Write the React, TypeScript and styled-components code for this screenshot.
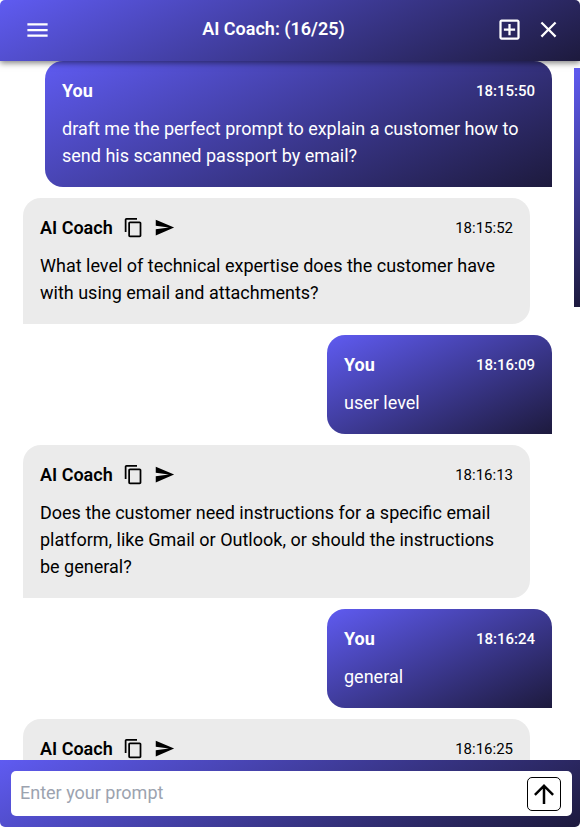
import React from "react";
import styled, { createGlobalStyle, css } from "styled-components";

const GlobalStyle = createGlobalStyle`
  *, *::before, *::after { box-sizing: border-box; }
  html, body, #root { height: 100%; margin: 0; }
  body { background: #fff; overflow: hidden; font-family: Roboto, "Liberation Sans", sans-serif; }
  button { font: inherit; color: inherit; }
`;

const brandGradient = css`
  background: linear-gradient(155deg, #5f5bf1 0%, #1d1a3d 100%);
`;

const Window = styled.main`
  display: flex;
  flex-direction: column;
  height: 100vh;
  overflow: hidden;
  border-radius: 5px;
  background: #fff;
`;

const Header = styled.header`
  ${brandGradient}
  display: flex;
  justify-content: space-between;
  align-items: center;
  flex: none;
  height: 61px;
  padding: 0 18px 2px 24px;
  color: #fff;
  z-index: 1;
  box-shadow: 0 2px 6px rgba(0, 0, 0, 0.5);
`;

const Title = styled.h1`
  margin: 0;
  padding-bottom: 2px;
  font-size: 18px;
  line-height: 27px;
  font-weight: 600;
`;

const HeaderActions = styled.div`
  display: flex;
  justify-content: flex-end;
  gap: 12px;
`;

const IconButton = styled.button<{ $size: number }>`
  display: flex;
  align-items: center;
  justify-content: center;
  width: ${({ $size }) => $size}px;
  height: ${({ $size }) => $size}px;
  padding: 0;
  border: 0;
  background: none;
  cursor: pointer;
`;

const Conversation = styled.section`
  display: flex;
  flex: 1;
  min-height: 0;
`;

const Messages = styled.div`
  display: flex;
  flex: 1;
  flex-direction: column;
  gap: 11px;
  min-width: 0;
  overflow: hidden;
  padding: 0 22px 0 23px;
`;

const Track = styled.div`
  flex: none;
  width: 6px;
  padding-top: 7px;
`;

const Thumb = styled.div`
  ${brandGradient}
  height: 239px;
`;

const Bubble = styled.article<{ $own: boolean }>`
  flex: none;
  min-width: 225px;
  max-width: calc(100% - 22px);
  padding: 16px 17px 18px;
  ${({ $own }) =>
    $own
      ? css`
          ${brandGradient}
          align-self: flex-end;
          color: #fff;
          border-radius: 18px 18px 0 18px;
        `
      : css`
          align-self: flex-start;
          width: 100%;
          background: #ebebeb;
          color: #000;
          border-radius: 18px 18px 18px 0;
        `}
`;

const BubbleHeader = styled.div`
  display: flex;
  align-items: center;
  gap: 10px;
  height: 27px;
  margin-bottom: 11px;
`;

const Author = styled.strong<{ $own: boolean }>`
  font-size: 18px;
  line-height: 27px;
  font-weight: ${({ $own }) => ($own ? 700 : 600)};
`;

const Time = styled.time<{ $own: boolean }>`
  margin-left: auto;
  padding-top: 1px;
  font-size: 15px;
  line-height: 27px;
  font-weight: ${({ $own }) => ($own ? 500 : 400)};
`;

const Body = styled.p`
  margin: 0;
  font-size: 18px;
  line-height: 27px;
`;

const Composer = styled.form`
  ${brandGradient}
  flex: none;
  padding: 11px 8px 11px 11px;
`;

const InputBox = styled.div`
  display: flex;
  align-items: center;
  height: 45px;
  padding: 0 11px 0 9px;
  border-radius: 5px;
  background: #fff;
`;

const PromptInput = styled.input`
  flex: 1;
  min-width: 0;
  padding: 0 0 2px;
  border: 0;
  outline: 0;
  background: none;
  font: 18px/27px Roboto, "Liberation Sans", sans-serif;
  color: #000;
  &::placeholder { color: #9ca3af; opacity: 1; }
`;

const SendButton = styled.button`
  display: flex;
  align-items: center;
  justify-content: center;
  width: 34px;
  height: 34px;
  padding: 0;
  border: 1px solid #000;
  border-radius: 5px;
  background: #fff;
  cursor: pointer;
`;

const paths = {
  menu: "M3 18h18v-2H3v2zm0-5h18v-2H3v2zm0-7v2h18V6H3z",
  add: "M19 3H5c-1.11 0-2 .9-2 2v14c0 1.1.89 2 2 2h14c1.1 0 2-.9 2-2V5c0-1.1-.9-2-2-2zm0 16H5V5h14v14zm-8-2h2v-4h4v-2h-4V7h-2v4H7v2h4z",
  close: "M19 6.41 17.59 5 12 10.59 6.41 5 5 6.41 10.59 12 5 17.59 6.41 19 12 13.41 17.59 19 19 17.59 13.41 12z",
  copy: "M16 1H4c-1.1 0-2 .9-2 2v14h2V3h12V1zm3 4H8c-1.1 0-2 .9-2 2v14c0 1.1.9 2 2 2h11c1.1 0 2-.9 2-2V7c0-1.1-.9-2-2-2zm0 16H8V7h11v14z",
  send: "M2.01 21 23 12 2.01 3 2 10l15 2-15 2z",
  up: "m4 12 1.41 1.41L11 7.83V20h2V7.83l5.58 5.59L20 12l-8-8-8 8z",
};

function Icon({ name, size }: { name: keyof typeof paths; size: number }) {
  return (
    <svg width={size} height={size} viewBox="0 0 24 24" fill="currentColor" aria-hidden="true">
      <path d={paths[name]} />
    </svg>
  );
}

type Message = { own: boolean; time: string; text?: string };

const messages: Message[] = [
  { own: true, time: "18:15:50", text: "draft me the perfect prompt to explain a customer how to send his scanned passport by email?" },
  { own: false, time: "18:15:52", text: "What level of technical expertise does the customer have with using email and attachments?" },
  { own: true, time: "18:16:09", text: "user level" },
  { own: false, time: "18:16:13", text: "Does the customer need instructions for a specific email platform, like Gmail or Outlook, or should the instructions be general?" },
  { own: true, time: "18:16:24", text: "general" },
  { own: false, time: "18:16:25" },
];

export default function App() {
  return (
    <>
      <GlobalStyle />
      <Window>
        <Header>
          <IconButton $size={27} type="button" aria-label="Menu"><Icon name="menu" size={28} /></IconButton>
          <Title>AI Coach: (16/25)</Title>
          <HeaderActions>
            <IconButton $size={27} type="button" aria-label="New chat"><Icon name="add" size={27} /></IconButton>
            <IconButton $size={27} type="button" aria-label="Close"><Icon name="close" size={27} /></IconButton>
          </HeaderActions>
        </Header>
        <Conversation>
          <Messages>
            {messages.map((m) => (
              <Bubble key={m.time} $own={m.own}>
                <BubbleHeader>
                  <Author $own={m.own}>{m.own ? "You" : "AI Coach"}</Author>
                  {!m.own && (
                    <>
                      <IconButton $size={21} type="button" aria-label="Copy"><Icon name="copy" size={21} /></IconButton>
                      <IconButton $size={21} type="button" aria-label="Send"><Icon name="send" size={21} /></IconButton>
                    </>
                  )}
                  <Time $own={m.own}>{m.time}</Time>
                </BubbleHeader>
                {m.text && <Body>{m.text}</Body>}
              </Bubble>
            ))}
          </Messages>
          <Track><Thumb /></Track>
        </Conversation>
        <Composer onSubmit={(e) => e.preventDefault()}>
          <InputBox>
            <PromptInput aria-label="Prompt" placeholder="Enter your prompt" />
            <SendButton type="submit" aria-label="Submit"><Icon name="up" size={30} /></SendButton>
          </InputBox>
        </Composer>
      </Window>
    </>
  );
}
